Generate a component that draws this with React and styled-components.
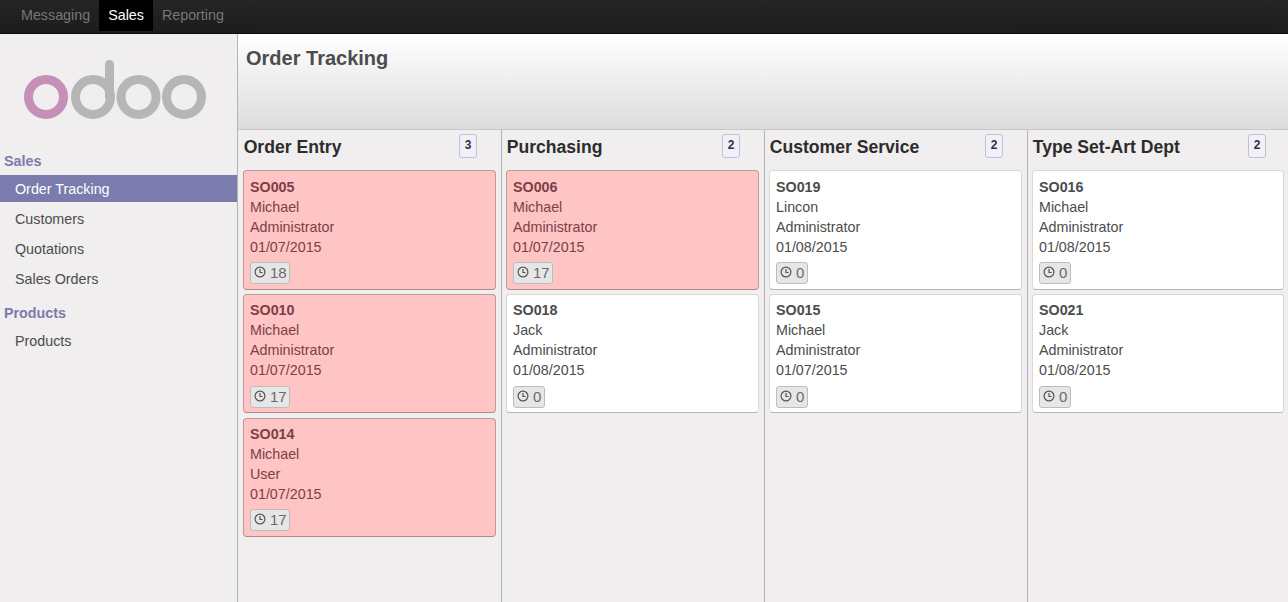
import React from "react";
import styled, { createGlobalStyle } from "styled-components";

const Global = createGlobalStyle`
  html, body { margin: 0; padding: 0; height: 100%; overflow: hidden; }
  body { font-family: "Liberation Sans", Arial, sans-serif; font-size: 14.3px; color: #4c4c4c; background: #f0eeee; }
`;
const Page = styled.div`display: flex; flex-direction: column; width: 1288px; height: 602px; overflow: hidden;`;
const TopBar = styled.nav`
  flex: none; height: 33px; padding-left: 12px; display: flex; align-items: flex-start;
  background: linear-gradient(#252525, #1c1c1c); border-bottom: 1px solid #0f0f0f;
`;
const TopLink = styled.a`
  height: 31px; line-height: 31px; padding: 0 9px; font-size: 14.3px;
  color: ${p => (p.$active ? "#fff" : "#777")};
  background: ${p => (p.$active ? "#000" : "transparent")};
`;
const Body = styled.div`flex: 1; display: flex; min-height: 0;`;
const Sidebar = styled.aside`flex: none; width: 237px; border-right: 1px solid #b4b4b4; background: #f0eeee;`;
const LogoBox = styled.div`height: 119px; padding: 25px 0 0 23px; box-sizing: border-box;`;
const SectionTitle = styled.div`
  font-weight: bold; font-size: 14.3px; line-height: 16px; color: #7c7bad; padding-left: 4px;
  margin: ${p => (p.$first ? "0 0 6px" : "13px 0 6px")};
`;
const MenuItem = styled.a`
  display: block; height: 27px; line-height: 29px; padding-left: 15px; margin-bottom: 3px; font-size: 14.3px;
  color: ${p => (p.$active ? "#fff" : "#4c4c4c")};
  background: ${p => (p.$active ? "#7c7bad" : "transparent")};
`;
const Main = styled.main`flex: 1; display: flex; flex-direction: column; min-width: 0;`;
const Header = styled.header`
  flex: none; height: 96px; box-sizing: border-box; padding: 13px 8px;
  background: linear-gradient(#fff, #dcdcdc); border-bottom: 1px solid #c8c8c8;
`;
const Title = styled.h1`margin: 0; font-size: 20px; line-height: 22px; font-weight: bold; color: #4c4c4c;`;
const Board = styled.div`flex: 1; display: grid; grid-template-columns: 264px 263px 263px 1fr; min-height: 0;`;
const Column = styled.section`
  box-sizing: border-box; padding: 0 5px 0 4px; border-right: 1px solid #b4b4b4; min-width: 0;
  &:first-child { padding-left: 5px; }
  &:last-child { border-right: 0; padding-right: 4px; }
`;
const ColHead = styled.div`display: flex; justify-content: space-between; width: 253px; height: 40.4px; box-sizing: border-box; padding-top: 4px;`;
const ColTitle = styled.h2`margin: 1px 0 0; padding-left: 0.7px; font-size: 17.6px; line-height: 24px; font-weight: bold; color: #2c2c2c;`;
const Count = styled.span`
  width: 16px; height: 22px; margin: 0 19px 0 0; text-align: center;
  border: 1px solid #bfc3d0; border-radius: 3px; background: #f0f0fa;
  font-size: 12px; font-weight: bold; line-height: 20px; color: #333;
`;
const Card = styled.article`
  box-sizing: border-box; height: 119.4px; margin-bottom: 4.2px; padding: 5.4px 6px;
  border: 1px solid ${p => (p.$late ? "#c09a9a" : "#d8d8d8")}; border-bottom-color: ${p => (p.$late ? "#b08888" : "#b4b4b4")};
  border-radius: 4px; background: ${p => (p.$late ? "#ffc4c4" : "#fff")};
  color: ${p => (p.$late ? "#7d3f47" : "#4c4c4c")};
  font-size: 14.3px; line-height: 20px;
`;
const Ref = styled.div`font-weight: bold;`;
const Line = styled.div``;
const Pill = styled.span`
  display: inline-flex; align-items: center; gap: 4px; height: 20px; margin-top: 5.2px; padding: 0 2.4px 0 3px;
  border: 1px solid #bdbdbd; border-radius: 3px; background: #e6e6e6; color: #6a6a6a; font-size: 15px;
  line-height: 20px;
`;
const ClockSvg = styled.svg`flex: none; width: 12px; height: 12px; margin-top: -2px;`;

const Clock = () => (
  <ClockSvg viewBox="0 0 12 12" fill="none" stroke="#555" strokeWidth="1.2">
    <circle cx="6" cy="6" r="4.9" />
    <path d="M6 3V6.5H8.6" />
  </ClockSvg>
);

const Logo = () => (
  <svg width="186" height="72" viewBox="0 0 186 72" fill="none" strokeWidth="9">
    <circle cx="23" cy="38" r="17.5" stroke="#c68fb8" />
    <circle cx="70" cy="38" r="17.5" stroke="#b6b6b6" />
    <path d="M86.5 38V5.5" stroke="#b6b6b6" strokeLinecap="round" />
    <circle cx="115.5" cy="38" r="17.5" stroke="#b6b6b6" />
    <circle cx="161" cy="38" r="17.5" stroke="#b6b6b6" />
  </svg>
);

const columns = [
  { title: "Order Entry", count: 3, cards: [
    { id: "SO005", a: "Michael", b: "Administrator", d: "01/07/2015", n: 18, late: true },
    { id: "SO010", a: "Michael", b: "Administrator", d: "01/07/2015", n: 17, late: true },
    { id: "SO014", a: "Michael", b: "User", d: "01/07/2015", n: 17, late: true },
  ]},
  { title: "Purchasing", count: 2, cards: [
    { id: "SO006", a: "Michael", b: "Administrator", d: "01/07/2015", n: 17, late: true },
    { id: "SO018", a: "Jack", b: "Administrator", d: "01/08/2015", n: 0 },
  ]},
  { title: "Customer Service", count: 2, cards: [
    { id: "SO019", a: "Lincon", b: "Administrator", d: "01/08/2015", n: 0 },
    { id: "SO015", a: "Michael", b: "Administrator", d: "01/07/2015", n: 0 },
  ]},
  { title: "Type Set-Art Dept", count: 2, cards: [
    { id: "SO016", a: "Michael", b: "Administrator", d: "01/08/2015", n: 0 },
    { id: "SO021", a: "Jack", b: "Administrator", d: "01/08/2015", n: 0 },
  ]},
];

export default function App() {
  return (
    <Page>
      <Global />
      <TopBar>
        <TopLink>Messaging</TopLink>
        <TopLink $active>Sales</TopLink>
        <TopLink>Reporting</TopLink>
      </TopBar>
      <Body>
        <Sidebar>
          <LogoBox><Logo /></LogoBox>
          <SectionTitle $first>Sales</SectionTitle>
          <MenuItem $active>Order Tracking</MenuItem>
          <MenuItem>Customers</MenuItem>
          <MenuItem>Quotations</MenuItem>
          <MenuItem>Sales Orders</MenuItem>
          <SectionTitle>Products</SectionTitle>
          <MenuItem>Products</MenuItem>
        </Sidebar>
        <Main>
          <Header><Title>Order Tracking</Title></Header>
          <Board>
            {columns.map(c => (
              <Column key={c.title}>
                <ColHead>
                  <ColTitle>{c.title}</ColTitle>
                  <Count>{c.count}</Count>
                </ColHead>
                {c.cards.map(k => (
                  <Card key={k.id} $late={k.late}>
                    <Ref>{k.id}</Ref>
                    <Line>{k.a}</Line>
                    <Line>{k.b}</Line>
                    <Line>{k.d}</Line>
                    <Pill><Clock />{k.n}</Pill>
                  </Card>
                ))}
              </Column>
            ))}
          </Board>
        </Main>
      </Body>
    </Page>
  );
}
